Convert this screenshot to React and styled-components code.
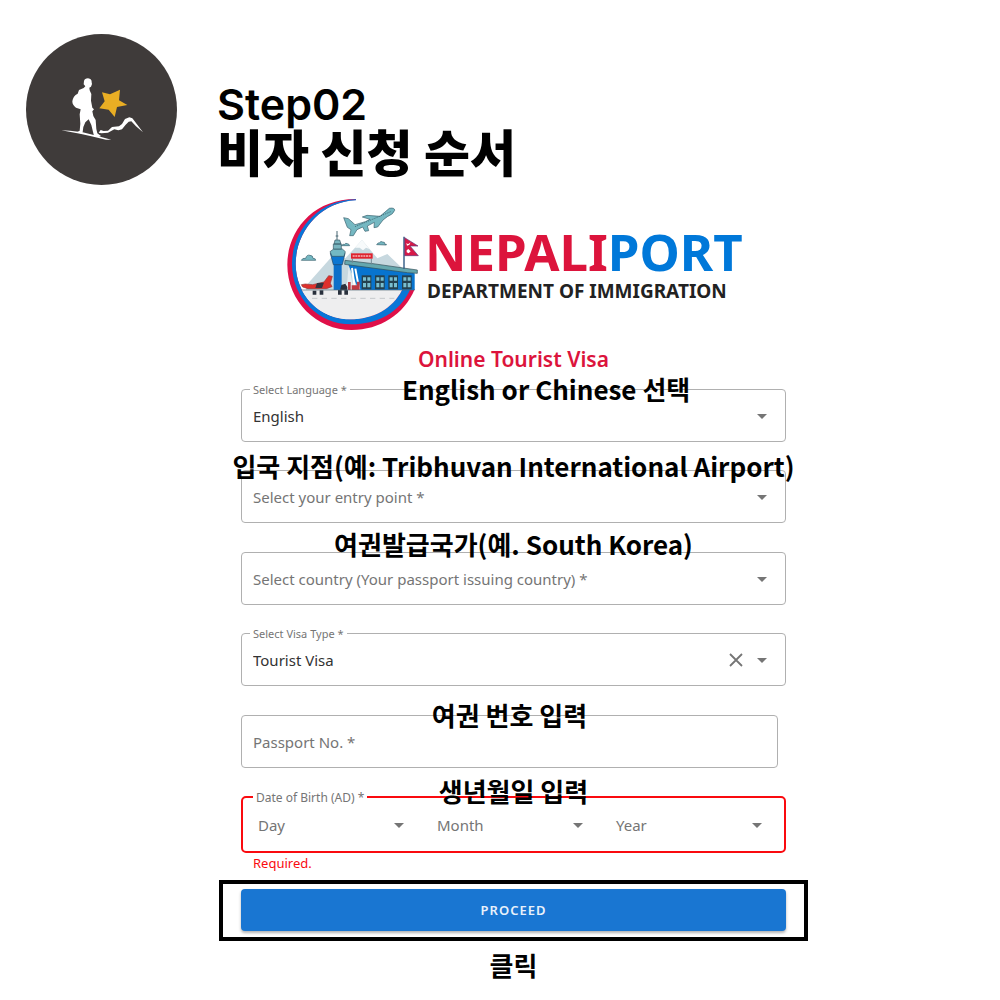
import React, { useState } from 'react';
import styled, { createGlobalStyle } from 'styled-components';

const GlobalStyle = createGlobalStyle`
  *, *::before, *::after { box-sizing: border-box; }
  body {
    margin: 0;
    background: #fff;
    color: #000;
    font-family: "Noto Sans", "Noto Sans CJK KR", sans-serif;
  }
`;

const Page = styled.div`
  padding: 34px 0 20px;
`;

const Header = styled.header`
  display: flex;
  align-items: flex-start;
  gap: 40px;
  padding: 0 26px;
`;

const Badge = styled.svg`
  flex: none;
  width: 151px;
  height: 151px;
`;

const Titles = styled.div`
  padding-top: 44px;
`;

const Step = styled.p`
  margin: 0;
  font: 600 43px/52px Inter, sans-serif;
`;

const Title = styled.h1`
  margin: 0;
  font: 900 50px/40px "Noto Sans CJK KR", sans-serif;
`;

const Panel = styled.main`
  margin: 0 192px 0 219px;
`;

const Brand = styled.div`
  display: flex;
  align-items: flex-start;
  padding: 12px 0 0 66px;
`;

const Emblem = styled.svg`
  flex: none;
  width: 140px;
  height: 136px;
`;

const BrandText = styled.div`
  padding-top: 26px;
  white-space: nowrap;
`;

const BrandName = styled.div`
  font-size: 51px;
  line-height: 56px;
  font-weight: 700;
  color: #dc143c;
`;

const BrandAccent = styled.span`
  color: #0078d9;
`;

const BrandSub = styled.div`
  padding-left: 2px;
  font-size: 19px;
  line-height: 24px;
  font-weight: 700;
  color: #222;
`;

const Form = styled.form`
  margin: 0;
`;

const FormTitle = styled.h2`
  margin: 0;
  padding: 10px 0 14px;
  font-size: 21px;
  line-height: 32px;
  font-weight: 600;
  color: #dc143c;
  text-align: center;
`;

const Fields = styled.div`
  display: flex;
  flex-direction: column;
  gap: 29px;
  padding: 0 22px;
`;

const Pair = styled.div`
  display: flex;
  flex-direction: column;
  gap: 28px;
`;

const Field = styled.div`
  position: relative;
  display: flex;
  align-items: center;
  height: 53px;
  margin-right: ${(p) => (p.$inset ? '8px' : '0')};
  border: 1px solid #b0b0b0;
  border-radius: 4px;
`;

const DateField = styled.fieldset`
  position: relative;
  display: flex;
  min-width: 0;
  height: 57px;
  margin: 0;
  padding: 0 0 0 4px;
  border: 2px solid #fa0a0f;
  border-radius: 5px;
`;

const DatePart = styled.div`
  position: relative;
  display: flex;
  flex: 1;
  align-items: center;
`;

const Label = styled.label`
  position: absolute;
  top: 50%;
  left: 11px;
  font-size: 15px;
  line-height: 20px;
  color: #757575;
  transform: translateY(-50%);
  pointer-events: none;
`;

const FloatLabel = styled.label`
  position: absolute;
  top: -9px;
  left: ${(p) => (p.$large ? '10px' : '8px')};
  padding: 0 3px;
  background: #fff;
  font-size: ${(p) => (p.$large ? '12px' : '11px')};
  line-height: 18px;
  color: #757575;
`;

const control = `
  flex: 1;
  min-width: 0;
  height: 100%;
  margin: 0;
  padding: 0 40px 0 11px;
  border: 0;
  background: transparent;
  color: #333;
  font: 400 15px/20px "Noto Sans", sans-serif;
  appearance: none;
  outline: 0;
`;

const Select = styled.select`${control}`;
const Input = styled.input`${control}`;

const Arrow = styled.svg`
  position: absolute;
  top: 50%;
  right: ${(p) => (p.$wide ? '22px' : '18px')};
  width: 10px;
  height: 5px;
  margin-top: -2px;
  fill: #757575;
  pointer-events: none;
`;

const Clear = styled.button`
  position: absolute;
  top: 50%;
  right: 41px;
  display: grid;
  place-items: center;
  width: 16px;
  height: 16px;
  margin-top: -8px;
  padding: 0;
  border: 0;
  background: transparent;
  cursor: pointer;
`;

const lifts = { low: '36px', mid: '40px', high: '44px' };

const Hint = styled.span`
  position: absolute;
  left: ${(p) => (p.$aside ? '56%' : '50%')};
  bottom: ${(p) => lifts[p.$lift || 'low']};
  font: 700 26px/32px "Noto Sans CJK KR", sans-serif;
  white-space: nowrap;
  transform: translateX(-50%);
  pointer-events: none;
`;

const ErrorText = styled.p`
  margin: 0;
  padding: 0 12px;
  font-size: 13px;
  line-height: 20px;
  color: #fa0a0f;
`;

const SubmitFrame = styled.div`
  margin-top: 7px;
  padding: 5px 18px 6px;
  border: 4px solid #000;
`;

const Submit = styled.button`
  display: block;
  width: 100%;
  height: 42px;
  border: 0;
  border-radius: 4px;
  background: #1976d2;
  color: #e8f1fb;
  font: 600 13px/24px "Noto Sans", sans-serif;
  letter-spacing: 1px;
  box-shadow: 0 2px 3px rgba(0, 0, 0, 0.3);
  cursor: pointer;
`;

const ClickNote = styled.p`
  margin: 0;
  padding-top: 8px;
  font: 700 26px/32px "Noto Sans CJK KR", sans-serif;
  text-align: center;
`;

function HikerBadge() {
  return (
    <Badge viewBox="18 27 453 453" role="img" aria-label="Hiker and star">
      <circle cx="244.500" cy="253.500" r="226.500" fill="#3f3b3a" />
      <g fill="#fff">
        <path d="M192 168Q194 160 204 160Q216 162 215 172L216 177L213 185L208 188L209 196L214 207L213 227L217 248L222 253L217 259L220 273L227 285L229 312L232 325L243 333L236 336L222 333L214 300L206 283L196 292L190 306L188 321L185 326L171 322L179 317L181 296L179 268L182 253L168 248Q157 241 157 229Q159 213 173 206L177 195L191 189L196 184L191 178Z" />
        <path d="M124 316L150 317L188 322L230 332L274 344L258 344L214 334L180 326L148 320Z" />
        <path d="M236 323L242 315L251 318L264 317L276 306L297 304L306 297L315 282L328 277L337 280L344 289L369 322L348 304L334 289L326 290L317 299L306 313L295 316L283 313L264 323L244 325Z" />
      </g>
      <path d="M246 202L270 208L300 194L297 226L322 240L291 246L284 276L266 254L238 250L254 229Z" fill="#e9ae24" />
    </Badge>
  );
}

function TerminalWindow({ x }) {
  return (
    <g>
      <rect x={x} y="256" width="29" height="42" fill="#24414f" />
      <path d={`M${x + 4} 262h9v10h-9zM${x + 17} 262h9v10h-9zM${x + 4} 279h9v13h-9zM${x + 17} 279h9v13h-9z`} fill="#79bfd0" />
    </g>
  );
}

function AirportEmblem() {
  return (
    <Emblem viewBox="15 21 420 408" role="img" aria-label="Nepaliport emblem">
      <path d="M228 27C100 26 22 122 22 224C22 334 110 420 215 420C300 420 372 374 404 298H366C330 350 280 388 210 388C116 388 47 312 47 222C47 128 118 36 228 30Z" fill="#df1049" />
      <path d="M228 28C110 30 36 126 36 222C36 324 116 403 213 403C292 403 358 368 390 300H366C338 356 280 388 210 388C116 388 47 312 47 222C47 128 118 36 228 31Z" fill="#0876d8" />
      <path d="M66 300H366C338 356 280 388 210 388C146 388 92 352 66 300Z" fill="#eeeeef" />
      <path d="M78 287L166 188L196 205L246 150L292 205L322 192L370 238V300H78Z" fill="#c7d8df" />
      <path d="M225 173L246 150L268 177L258 173L249 181L239 173Z" fill="#f7fafb" />
      <g fill="#75b8c2" stroke="#385f6d" strokeWidth="2">
        <path d="M64 211q3-8 13-6q3-12 13-9q9 0 9 9q9 0 8 6zM290 164q4-7 9-6q3-6 9-2q7-1 7 7h4v2zM184 167q5-6 10-4q3-5 8-2q5 0 7 6z" />
        <path d="M191 83L205 86L225 104L256 95L270 88L247 81L261 76L300 79L328 55Q344 52 344 61Q341 72 322 80L309 90L293 111L282 113L283 97L262 108L266 122L255 124L248 111L231 119L220 137L209 137L213 119L202 112Z" />
      </g>
      <path d="M225 110L332 65" stroke="#31525e" strokeWidth="2" strokeDasharray="4 3" />
      <path d="M161 222H185V300H161Z" fill="#0c6fc9" />
      <path d="M151 190H195L187 224H160Z" fill="#0c76d1" stroke="#234664" strokeWidth="2" />
      <path d="M150 185L161 177H187L196 185L192 199H156Z" fill="#73b9c4" stroke="#355461" strokeWidth="2" />
      <path d="M160 162H184V177H160ZM165 150H179L183 162H162Z" fill="#79b5bf" stroke="#355461" strokeWidth="2" />
      <path d="M171 123V150M167 138H175" stroke="#486773" strokeWidth="3" />
      <path d="M204 221L404 250V300H236Z" fill="#0874cf" />
      <path d="M206 228L222 299H187L190 281H201Z" fill="#e4edf0" />
      <path d="M216 234L225 299M226 236L238 299" stroke="#fff" strokeWidth="6" />
      <path d="M204 276H212V300H204ZM231 275H239V300H215V286H231Z" fill="#bd3943" />
      <path d="M195 211L279 221L412 240V250L382 248L194 223Z" fill="#65a7ae" stroke="#314c55" strokeWidth="2" />
      <TerminalWindow x={245} />
      <TerminalWindow x={285} />
      <TerminalWindow x={325} />
      <TerminalWindow x={366} />
      <path d="M217 206V219M274 206V224" stroke="#718a94" strokeWidth="3" />
      <path d="M213 190H278V206H213Z" fill="#df222d" />
      <path d="M218 198H273" stroke="#fff" strokeWidth="3" strokeDasharray="6 2" />
      <path d="M372 140V236" stroke="#25517d" strokeWidth="4" />
      <path d="M374 143L414 168H390L415 197H374Z" fill="#d71947" stroke="#5c3678" strokeWidth="2" />
      <path d="M379 159Q385 166 391 157Q390 167 381 167ZM380 181L385 177L392 184L386 190L380 187Z" fill="#fff" />
      <path d="M64 284L76 282L98 284L132 276L146 257L157 259L151 280L156 290L139 296H84L68 291Z" fill="#df302c" stroke="#973638" strokeWidth="2" />
      <path d="M111 279L132 278L126 294H106Z" fill="#34333f" />
      <path d="M98 302H109V314H98ZM119 301H130V314H119ZM174 300H185V314H174ZM193 301H204V314H193ZM184 285L196 281L202 291V301H180Z" fill="#29303c" />
      <path d="M64 300H404" stroke="#526b76" strokeWidth="2" />
      <path d="M96 325H343" stroke="#c5c8ca" strokeWidth="3" strokeDasharray="16 13" />
    </Emblem>
  );
}

function ArrowIcon({ wide }) {
  return (
    <Arrow $wide={wide} viewBox="0 0 10 5" aria-hidden="true">
      <path d="M0 0h10L5 5z" />
    </Arrow>
  );
}

function SelectField({ id, label, value, hint, lift, aside, onClear }) {
  const Caption = value ? FloatLabel : Label;
  return (
    <Field>
      {hint && <Hint $lift={lift} $aside={aside}>{hint}</Hint>}
      <Select id={id} required>
        <option>{value}</option>
      </Select>
      <Caption htmlFor={id}>{label}</Caption>
      {onClear && (
        <Clear type="button" aria-label="Clear" onClick={onClear}>
          <svg width="14" height="14" viewBox="0 0 14 14" aria-hidden="true">
            <path d="M1 1l12 12M13 1L1 13" stroke="#757575" strokeWidth="1.800" />
          </svg>
        </Clear>
      )}
      <ArrowIcon />
    </Field>
  );
}

export default function App() {
  const [visa, setVisa] = useState('Tourist Visa');
  return (
    <Page>
      <GlobalStyle />
      <Header>
        <HikerBadge />
        <Titles>
          <Step>Step02</Step>
          <Title>비자 신청 순서</Title>
        </Titles>
      </Header>
      <Panel>
        <Brand>
          <AirportEmblem />
          <BrandText>
            <BrandName>NEPALI<BrandAccent>PORT</BrandAccent></BrandName>
            <BrandSub>DEPARTMENT OF IMMIGRATION</BrandSub>
          </BrandText>
        </Brand>
        <Form onSubmit={(e) => e.preventDefault()}>
          <FormTitle>Online Tourist Visa</FormTitle>
          <Fields>
            <Pair>
              <SelectField id="language" label="Select Language *" value="English" hint="English or Chinese 선택" aside />
              <SelectField id="entry" label="Select your entry point *" value="" hint="입국 지점(예: Tribhuvan International Airport)" lift="mid" />
            </Pair>
            <Pair>
              <SelectField id="country" label="Select country (Your passport issuing country) *" value="" hint="여권발급국가(예. South Korea)" lift="high" />
              <SelectField id="visa" label="Select Visa Type *" value={visa} onClear={() => setVisa('')} />
            </Pair>
            <Pair>
              <Field $inset>
                <Hint>여권 번호 입력</Hint>
                <Input id="passport" type="text" required />
                <Label htmlFor="passport">Passport No. *</Label>
              </Field>
              <div>
                <DateField aria-labelledby="birth">
                  <Hint $lift="high">생년월일 입력</Hint>
                  <FloatLabel as="span" id="birth" $large>Date of Birth (AD) *</FloatLabel>
                  {['Day', 'Month', 'Year'].map((part) => (
                    <DatePart key={part}>
                      <Select id={part} required><option /></Select>
                      <Label htmlFor={part}>{part}</Label>
                      <ArrowIcon wide />
                    </DatePart>
                  ))}
                </DateField>
                <ErrorText>Required.</ErrorText>
              </div>
            </Pair>
          </Fields>
          <SubmitFrame>
            <Submit type="submit">PROCEED</Submit>
          </SubmitFrame>
          <ClickNote>클릭</ClickNote>
        </Form>
      </Panel>
    </Page>
  );
}
